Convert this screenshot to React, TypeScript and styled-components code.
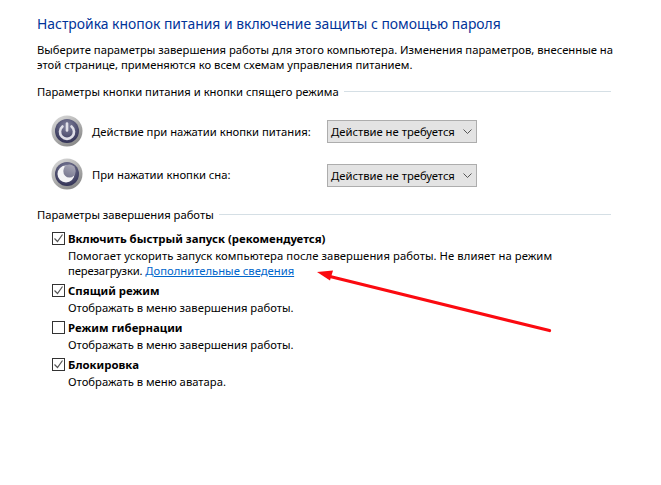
import React from "react";
import styled, { createGlobalStyle } from "styled-components";

const Global = createGlobalStyle`
  html, body { margin: 0; padding: 0; background: #fff; }
  body { font-family: "Noto Sans", "Open Sans", sans-serif; font-size: 11.25px; color: #000; }
  #root { width: 661px; height: 485px; overflow: hidden; }
`;

const Page = styled.div`
  position: relative;
  width: 661px;
  height: 485px;
  box-sizing: border-box;
  padding: 14px 0 0 37px;
`;

const Title = styled.h1`
  margin: 0 0 8px;
  font-size: 13.9px;
  line-height: 20px;
  font-weight: 400;
  color: #003399;
  white-space: nowrap;
`;

const Desc = styled.p`
  margin: 0 0 11px;
  line-height: 15px;
  width: 600px;
  white-space: pre-line;
`;

const SectionHeader = styled.div`
  display: flex;
  align-items: center;
  gap: 5px;
  width: 574px;
  height: 17px;
  white-space: nowrap;

  &::after {
    content: "";
    flex: 1;
    height: 1px;
    background: #d5dfe5;
  }
`;

const PowerRows = styled.div`
  display: flex;
  flex-direction: column;
  gap: 11px;
  padding: 15px 0 0 14px;
  margin-bottom: 16px;
`;

const PowerRow = styled.div`
  display: flex;
  align-items: center;
  height: 32px;
`;

const Label = styled.span`
  width: 235px;
  margin-left: 9px;
  white-space: nowrap;
`;

const Select = styled.div<{ $drop?: number }>`
  box-sizing: border-box;
  width: 150px;
  height: 23px;
  margin-top: ${(p) => p.$drop ?? 0}px;
  display: flex;
  align-items: center;
  justify-content: space-between;
  padding: 0 4px 0 3px;
  background: #e3e3e3;
  border: 1px solid #adadad;
  white-space: nowrap;
`;

const Options = styled.div`
  display: flex;
  flex-direction: column;
  padding: 6px 0 0 15px;
`;

const Option = styled.div`
  display: flex;
  flex-direction: column;
  margin-bottom: 3px;
`;

const OptionHead = styled.div`
  display: flex;
  align-items: center;
  gap: 3px;
  height: 19px;
  font-weight: 700;
  font-size: 11.4px;
  white-space: nowrap;
`;

const Box = styled.span`
  box-sizing: border-box;
  width: 13px;
  height: 13px;
  border: 1px solid #333;
  background: #fff;
  display: flex;
  align-items: center;
  justify-content: center;
  flex: none;
`;

const OptionText = styled.div`
  padding-left: 16px;
  line-height: 15px;
  white-space: pre-line;
`;

const RestartNote = styled.span`
  letter-spacing: -0.15px;
`;

const FirstLine = styled.span`
  letter-spacing: 0.07px;
`;

const MoreLink = styled.a`
  color: #0066cc;
  text-decoration: underline;
`;

const Arrow = styled.svg`
  position: absolute;
  left: 0;
  top: 0;
  pointer-events: none;
`;

const PowerIcon = ({ moon }: { moon?: boolean }) => (
  <svg width="32" height="32" viewBox="0 0 32 32">
    <defs>
      <linearGradient id={moon ? "rm" : "rp"} x1="0.2" y1="0" x2="0.8" y2="1">
        <stop offset="0" stopColor="#d8d8d8" />
        <stop offset="1" stopColor="#848484" />
      </linearGradient>
      <radialGradient id={moon ? "im" : "ip"} cx="0.5" cy="0.3" r="0.75">
        <stop offset="0" stopColor="#83849f" />
        <stop offset="1" stopColor="#2c2c50" />
      </radialGradient>
      <linearGradient id="disc" x1="0.7" y1="0" x2="0.3" y2="1">
        <stop offset="0" stopColor="#a9a9b8" />
        <stop offset="1" stopColor="#77778f" />
      </linearGradient>
    </defs>
    <circle cx="16" cy="16" r="15.5" fill={`url(#${moon ? "rm" : "rp"})`} />
    <circle cx="16" cy="16" r="12" fill={`url(#${moon ? "im" : "ip"})`} />
    {moon ? (
      <>
        <circle cx="15" cy="16" r="8.5" fill="#f4f4f6" />
        <ellipse cx="18.5" cy="13" rx="6.2" ry="6.6" fill="url(#disc)" />
      </>
    ) : (
      <>
        <path d="M11.5 11.5a7 7 0 1 0 9 0" fill="none" stroke="#dfdfe8" strokeWidth="2.6" strokeLinecap="round" />
        <path d="M16 8.5v7" fill="none" stroke="#dfdfe8" strokeWidth="2.6" strokeLinecap="round" />
      </>
    )}
  </svg>
);

const Chevron = () => (
  <svg width="9" height="5" viewBox="0 0 9 5">
    <path d="M0.5 0.5l4 4 4-4" fill="none" stroke="#555" strokeWidth="1" />
  </svg>
);

const Check = () => (
  <svg width="11" height="11" viewBox="0 0 11 11">
    <path d="M1.5 5.5l3 3 5-7" fill="none" stroke="#555" strokeWidth="1.2" />
  </svg>
);

const Dropdown = ({ drop }: { drop?: number }) => (
  <Select $drop={drop}>
    <span>Действие не требуется</span>
    <Chevron />
  </Select>
);

const CheckOption = ({ checked, title, children }: { checked?: boolean; title: string; children: React.ReactNode }) => (
  <Option>
    <OptionHead>
      <Box>{checked && <Check />}</Box>
      <span>{title}</span>
    </OptionHead>
    <OptionText>{children}</OptionText>
  </Option>
);

export default function App() {
  return (
    <Page>
      <Global />
      <Title>Настройка кнопок питания и включение защиты с помощью пароля</Title>
      <Desc>
        {"Выберите параметры завершения работы для этого компьютера. Изменения параметров, внесенные на\nэтой странице, применяются ко всем схемам управления питанием."}
      </Desc>
      <SectionHeader>Параметры кнопки питания и кнопки спящего режима</SectionHeader>
      <PowerRows>
        <PowerRow>
          <PowerIcon />
          <Label>Действие при нажатии кнопки питания:</Label>
          <Dropdown />
        </PowerRow>
        <PowerRow>
          <PowerIcon moon />
          <Label>При нажатии кнопки сна:</Label>
          <Dropdown drop={3} />
        </PowerRow>
      </PowerRows>
      <SectionHeader>Параметры завершения работы</SectionHeader>
      <Options>
        <CheckOption checked title="Включить быстрый запуск (рекомендуется)">
          <FirstLine>{"Помогает ускорить запуск компьютера после завершения работы. Не влияет на режим\n"}</FirstLine>
          <RestartNote>{"перезагрузки. "}</RestartNote>
          <MoreLink>Дополнительные сведения</MoreLink>
        </CheckOption>
        <CheckOption checked title="Спящий режим">Отображать в меню завершения работы.</CheckOption>
        <CheckOption title="Режим гибернации">Отображать в меню завершения работы.</CheckOption>
        <CheckOption checked title="Блокировка">Отображать в меню аватара.</CheckOption>
      </Options>
      <Arrow width="661" height="485" viewBox="0 0 661 485">
        <path d="M549.5 330.5L328 276" stroke="#fb0a10" strokeWidth="3.2" strokeLinecap="round" fill="none" />
        <path d="M317 272L333 270.5L330 280.5Z" fill="#fb0a10" />
      </Arrow>
    </Page>
  );
}
